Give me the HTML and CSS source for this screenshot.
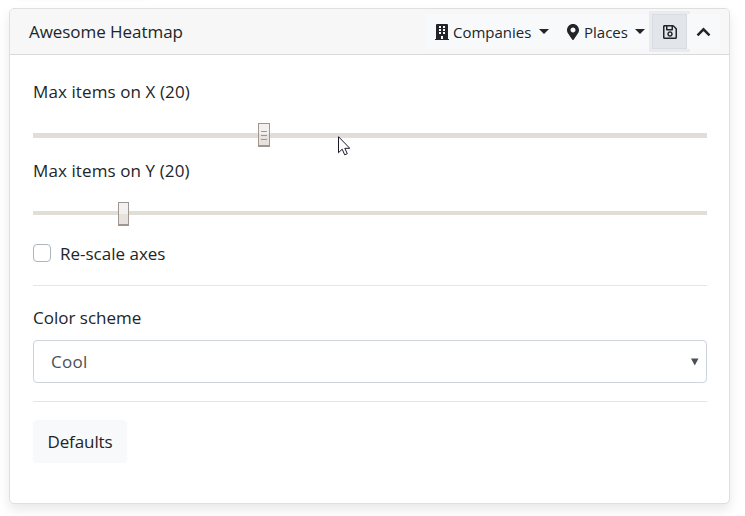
FILE: index.html
```
<!DOCTYPE html>
<html lang="en">
<head>
<meta charset="utf-8">
<title>Awesome Heatmap</title>
<link rel="stylesheet" href="styles.css">
</head>
<body>
<main class="card">
  <header class="card-header">
    <h1 class="title">Awesome Heatmap</h1>
    <div class="toolbar">
      <button class="tool companies">
        <svg class="icon-building" viewBox="0 0 14 16"><path fill="currentColor" fill-rule="evenodd" d="M1 1q0-1 1-1h10q1 0 1 1v14h1v1H0v-1h1zM4 2v2h2V2zm4 0v2h2V2zM4 5v2h2V5zm4 0v2h2V5zM4 8v2h2V8zm4 0v2h2V8zm-2 4v3h2v-3z"/></svg>
        <span class="tool-label wide">Companies</span><i class="caret"></i>
      </button>
      <button class="tool places">
        <svg class="icon-pin" viewBox="0 0 384 512"><path fill="currentColor" d="M172.300 501.700C27 291 0 269.400 0 192 0 86 86 0 192 0s192 86 192 192c0 77.400-27 99-172.300 309.700-9.500 13.800-29.900 13.800-39.400 0zM192 272c44.200 0 80-35.800 80-80s-35.800-80-80-80-80 35.800-80 80 35.800 80 80 80z"/></svg>
        <span class="tool-label narrow">Places</span><i class="caret"></i>
      </button>
      <button class="tool save active" aria-label="Save">
        <svg class="icon-save" viewBox="0 0 448 512"><path fill="currentColor" d="M433.900 129.900l-83.900-83.900A48 48 0 0 0 316.100 32H48C21.500 32 0 53.500 0 80v352c0 26.500 21.500 48 48 48h352c26.500 0 48-21.500 48-48V163.900a48 48 0 0 0-14.100-34zM272 80v80H144V80h128zm122 352H54a6 6 0 0 1-6-6V86a6 6 0 0 1 6-6h42v104c0 13.300 10.700 24 24 24h176c13.300 0 24-10.700 24-24V83.900l78.200 78.200a6 6 0 0 1 1.800 4.200V426a6 6 0 0 1-6 6zM224 232c-48.500 0-88 39.500-88 88s39.500 88 88 88 88-39.500 88-88-39.500-88-88-88zm0 128c-22.100 0-40-17.900-40-40s17.900-40 40-40 40 17.900 40 40-17.900 40-40 40z"/></svg>
      </button>
      <button class="tool collapse" aria-label="Collapse">
        <svg class="icon-chevron" viewBox="0 0 15 10"><path d="M1.500 8.300 7.500 2.300l6 6" fill="none" stroke="currentColor" stroke-width="2.500"/></svg>
      </button>
    </div>
  </header>
  <section class="card-body">
    <div class="label">Max items on X (20)</div>
    <div class="slider slider-x"><div class="thumb grip"><i></i><i></i><i></i></div></div>
    <div class="label label-y">Max items on Y (20)</div>
    <div class="slider slider-y"><div class="thumb"></div></div>
    <label class="check"><span class="box"></span><span class="check-label">Re-scale axes</span></label>
    <hr>
    <div class="label scheme">Color scheme</div>
    <div class="select"><span>Cool</span><svg class="arrow" viewBox="0 0 8 8"><path d="M0 .5h7.500L3.750 7.500z" fill="#495057"/></svg></div>
    <hr>
    <button class="defaults">Defaults</button>
  </section>
</main>
<svg class="cursor" viewBox="0 0 12 20"><path d="M.5.700v16l3.700-3.500 2.500 5.600 2.600-1.100-2.500-5.400h5z" fill="#fff" stroke="#1c1828" stroke-width="1"/></svg>
</body>
</html>
```
FILE: styles.css
```
* { box-sizing: border-box; }
body {
  margin: 0;
  padding: 8px 0 0 9px;
  height: 516px;
  overflow: hidden;
  background: linear-gradient(#fafafa, #fff) 18px 0 / 128px 2px no-repeat #fff;
  color: #212529;
  font: 17px/27px "Open Sans", "Noto Sans", sans-serif;
}
button { font: inherit; color: inherit; border: 0; padding: 0; }
svg { display: block; flex: none; }
.card {
  width: 721px;
  height: 496px;
  border: 1px solid #dfdfdf;
  border-radius: 5px;
  background: #fff;
  box-shadow: 0 6px 12px rgba(0, 0, 0, .09);
}
.card-header {
  display: flex;
  align-items: center;
  justify-content: space-between;
  height: 46px;
  padding: 0 9px 0 19px;
  border-bottom: 1px solid #d9d9d9;
  border-radius: 4px 4px 0 0;
  background: #f7f7f7;
}
.title { margin: 0; font-size: 17px; font-weight: 400; letter-spacing: -.05px; }
.toolbar { display: flex; align-items: center; }
.tool {
  display: flex;
  align-items: center;
  height: 35px;
  background: #f8f9fa;
  font-size: 15px;
}
.tool-label { position: relative; top: 1px; }
.companies { width: 132px; padding-left: 10px; }
.places { width: 95px; padding-left: 10px; }
.icon-building { width: 14px; height: 16px; margin-right: 4px; }
.icon-pin { width: 12px; height: 16px; margin-right: 5px; }
.wide { width: 86px; text-align: left; }
.narrow { width: 51px; text-align: left; }
.caret { border: 5px solid transparent; border-top-color: #212529; border-bottom: 0; }
.save {
  width: 35px;
  justify-content: center;
  border: 1px solid #d9dde3;
  background: #e2e6ea;
  box-shadow: 0 0 0 3px #e9ecef;
}
.icon-save { width: 14px; height: 16px; }
.collapse { width: 33px; padding-left: 9px; }
.icon-chevron { width: 15px; height: 10px; }
.card-body { padding: 23px 22px 0 23px; }
.label { height: 27px; }
.label:not(.scheme) { letter-spacing: .1px; }
.slider { display: flex; align-items: center; height: 24px; }
.slider-x {
  margin-top: 18px;
  padding-left: 225px;
  background: linear-gradient(#e2ddd8, #e2ddd8) 0 10px / 100% 5px no-repeat;
}
.slider-y {
  margin-top: 18px;
  padding-left: 85px;
  background: linear-gradient(#e2ddd6, #e2ddd6) 0 9px / 100% 4px no-repeat;
}
.label-y { margin-top: 10px; }
.thumb {
  width: 11px;
  height: 24px;
  border: 1px solid #9f968f;
  border-bottom-width: 2px;
  background: linear-gradient(#f3f1ef 50%, #e8e2df 50%);
}
.grip {
  display: flex;
  flex-direction: column;
  align-items: center;
  gap: 3px;
  width: 12px;
  padding-top: 7px;
}
.grip i { width: 6px; height: 1px; background: #9f968f; }
.check { display: flex; align-items: center; height: 27px; margin-top: 14px; }
.box {
  width: 18px;
  height: 18px;
  margin: 0 9px 2px 0;
  border: 1px solid #adb5bd;
  border-radius: 4px;
}
hr { height: 1px; margin: 18px 0; border: 0; background: #e5e5e5; }
.select {
  display: flex;
  align-items: center;
  justify-content: space-between;
  height: 43px;
  margin-top: 9px;
  padding: 0 7px 0 17px;
  border: 1px solid #ced4da;
  border-radius: 4px;
  color: #495057;
  letter-spacing: .3px;
}
.arrow { width: 8px; height: 8px; }
.defaults {
  width: 94px;
  height: 43px;
  border-radius: 4px;
  background: #f8f9fa;
  letter-spacing: -.1px;
}
.cursor { position: absolute; left: 338px; top: 136px; width: 12px; height: 20px; }
```
